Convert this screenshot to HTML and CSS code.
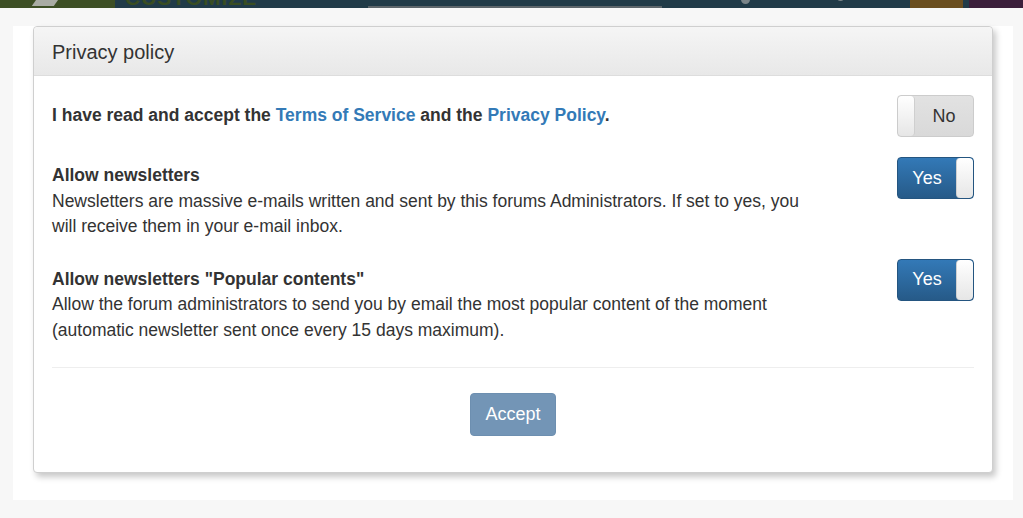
FILE: index.html
```html
<!DOCTYPE html>
<html lang="en">
<head>
  <meta charset="UTF-8" />
  <meta name="viewport" content="width=device-width, initial-scale=1.0" />
  <title>Privacy policy</title>
  <link rel="stylesheet" href="styles.css">
</head>
<body>

  <!-- Header strip (bottom edge of the banner) -->
  <div class="topbar">
    <div class="tb-green"><span class="tb-mark"></span></div>
    <div class="tb-blue">
      <span class="tb-word">CUSTOMIZE</span>
      <span class="tb-search"></span>
      <span class="tb-dot"></span>
      <span class="tb-dot small"></span>
    </div>
    <div class="tb-orange"></div>
    <div class="tb-gap"></div>
    <div class="tb-purple"></div>
  </div>

  <!-- Main Content -->
  <div class="wrap">
    <div class="panel">
      <div class="panel-heading">Privacy policy</div>
      <div class="panel-body">

        <div class="opt-row first">
          <div class="opt-text">
            <strong>I have read and accept the <a href="#">Terms of Service</a> and the <a href="#">Privacy Policy</a>.</strong>
          </div>
          <button class="switch off"><span class="knob"></span><span class="label">No</span></button>
        </div>

        <div class="opt-row">
          <div class="opt-text">
            <strong>Allow newsletters</strong><br>
            Newsletters are massive e-mails written and sent by this forums Administrators. If set to yes, you will receive them in your e-mail inbox.
          </div>
          <button class="switch on"><span class="label">Yes</span><span class="knob"></span></button>
        </div>

        <div class="opt-row last">
          <div class="opt-text">
            <strong>Allow newsletters "Popular contents"</strong><br>
            Allow the forum administrators to send you by email the most popular content of the moment (automatic newsletter sent once every 15 days maximum).
          </div>
          <button class="switch on"><span class="label">Yes</span><span class="knob"></span></button>
        </div>

        <hr class="divider">

        <div class="actions">
          <button class="btn-accept" disabled>Accept</button>
        </div>

      </div>
    </div>
  </div>

</body>
</html>
```

FILE: styles.css
```css
body {
  margin: 0;
  padding: 0;
  background: #f7f7f7;
  font-family: "Liberation Sans", Arial, sans-serif;
  font-size: 17.5px;
  color: #333333;
}

/* banner strip */
.topbar {
  display: flex;
  height: 8px;
  overflow: hidden;
}

.tb-green {
  width: 115px;
  background: #3d4f25;
  position: relative;
}

.tb-mark {
  position: absolute;
  left: 36px;
  top: -6px;
  width: 22px;
  height: 12px;
  background: #a9aca4;
  transform: skewX(-35deg);
}

.tb-blue {
  flex: 1;
  background: #213b48;
  position: relative;
}

.tb-word {
  position: absolute;
  left: 10px;
  top: -14px;
  font-weight: bold;
  font-size: 21px;
  letter-spacing: 1px;
  color: #394d22;
}

.tb-search {
  position: absolute;
  left: 253px;
  width: 294px;
  bottom: 0;
  height: 2px;
  background: #5d666b;
}

.tb-dot {
  position: absolute;
  left: 626px;
  top: -5px;
  width: 9px;
  height: 9px;
  border-radius: 50%;
  background: #7b8589;
}

.tb-dot.small {
  left: 722px;
  top: -6px;
  width: 7px;
  height: 7px;
}

.tb-orange {
  width: 53px;
  background: #6a4e1f;
}

.tb-gap {
  width: 6px;
  background: #213b48;
}

.tb-purple {
  width: 54px;
  background: #3b1f3b;
}

/* page */
.wrap {
  width: 960px;
  margin: 18px 0 0 13px;
  padding: 0 20px 27px;
  background: #ffffff;
}

.panel {
  border: 1px solid #cfcfcf;
  border-radius: 4px;
  background: #ffffff;
  box-shadow: 3px 4px 6px rgba(0, 0, 0, 0.22);
}

.panel-heading {
  height: 46px;
  line-height: 46px;
  padding: 2px 18px 0;
  font-size: 20px;
  color: #333333;
  background: linear-gradient(#f5f5f5, #e8e8e8);
  border-bottom: 1px solid #dddddd;
  border-radius: 4px 4px 0 0;
}

.panel-body {
  padding: 19px 18px 36px;
}

.opt-row {
  display: flex;
  justify-content: space-between;
  align-items: flex-start;
  margin-bottom: 19px;
}

.opt-row.first {
  align-items: center;
  margin-bottom: 20px;
}

.opt-row.last {
  margin-bottom: 0;
}

.opt-text {
  width: 760px;
  line-height: 25.5px;
  padding-top: 6px;
}

.opt-row.first .opt-text {
  padding-top: 0;
}

.opt-row.last .opt-text {
  padding-top: 8px;
}

.opt-text strong {
  font-weight: bold;
}

.opt-text a {
  color: #337ab7;
  text-decoration: none;
}

/* toggle switch */
.switch {
  display: flex;
  width: 77px;
  height: 42px;
  padding: 0;
  border-radius: 4px;
  font-family: inherit;
  font-size: 18px;
  cursor: pointer;
  overflow: hidden;
}

.switch .label {
  flex: 1;
  display: flex;
  align-items: center;
  justify-content: center;
}

.switch .knob {
  width: 16px;
  background: linear-gradient(#ffffff, #e6e6e6);
  border-radius: 4px;
}

.switch.on {
  background: linear-gradient(#3379b7, #265a88);
  border: 1px solid #245580;
  color: #ffffff;
}

.switch.on .knob {
  border-left: 1px solid #d0d0d0;
}

.switch.off {
  background: linear-gradient(#e2e2e2, #d9d9d9);
  border: 1px solid #cccccc;
  color: #333333;
}

.switch.off .knob {
  border-right: 1px solid #cfcfcf;
}

.divider {
  border: 0;
  border-top: 1px solid #eeeeee;
  margin: 24px 0 25px;
}

.actions {
  display: flex;
  justify-content: center;
}

.btn-accept {
  width: 86px;
  height: 43px;
  border: 1px solid #6d8fb0;
  border-radius: 4px;
  background: #7395b6;
  color: #ffffff;
  font-family: inherit;
  font-size: 18px;
}
```
